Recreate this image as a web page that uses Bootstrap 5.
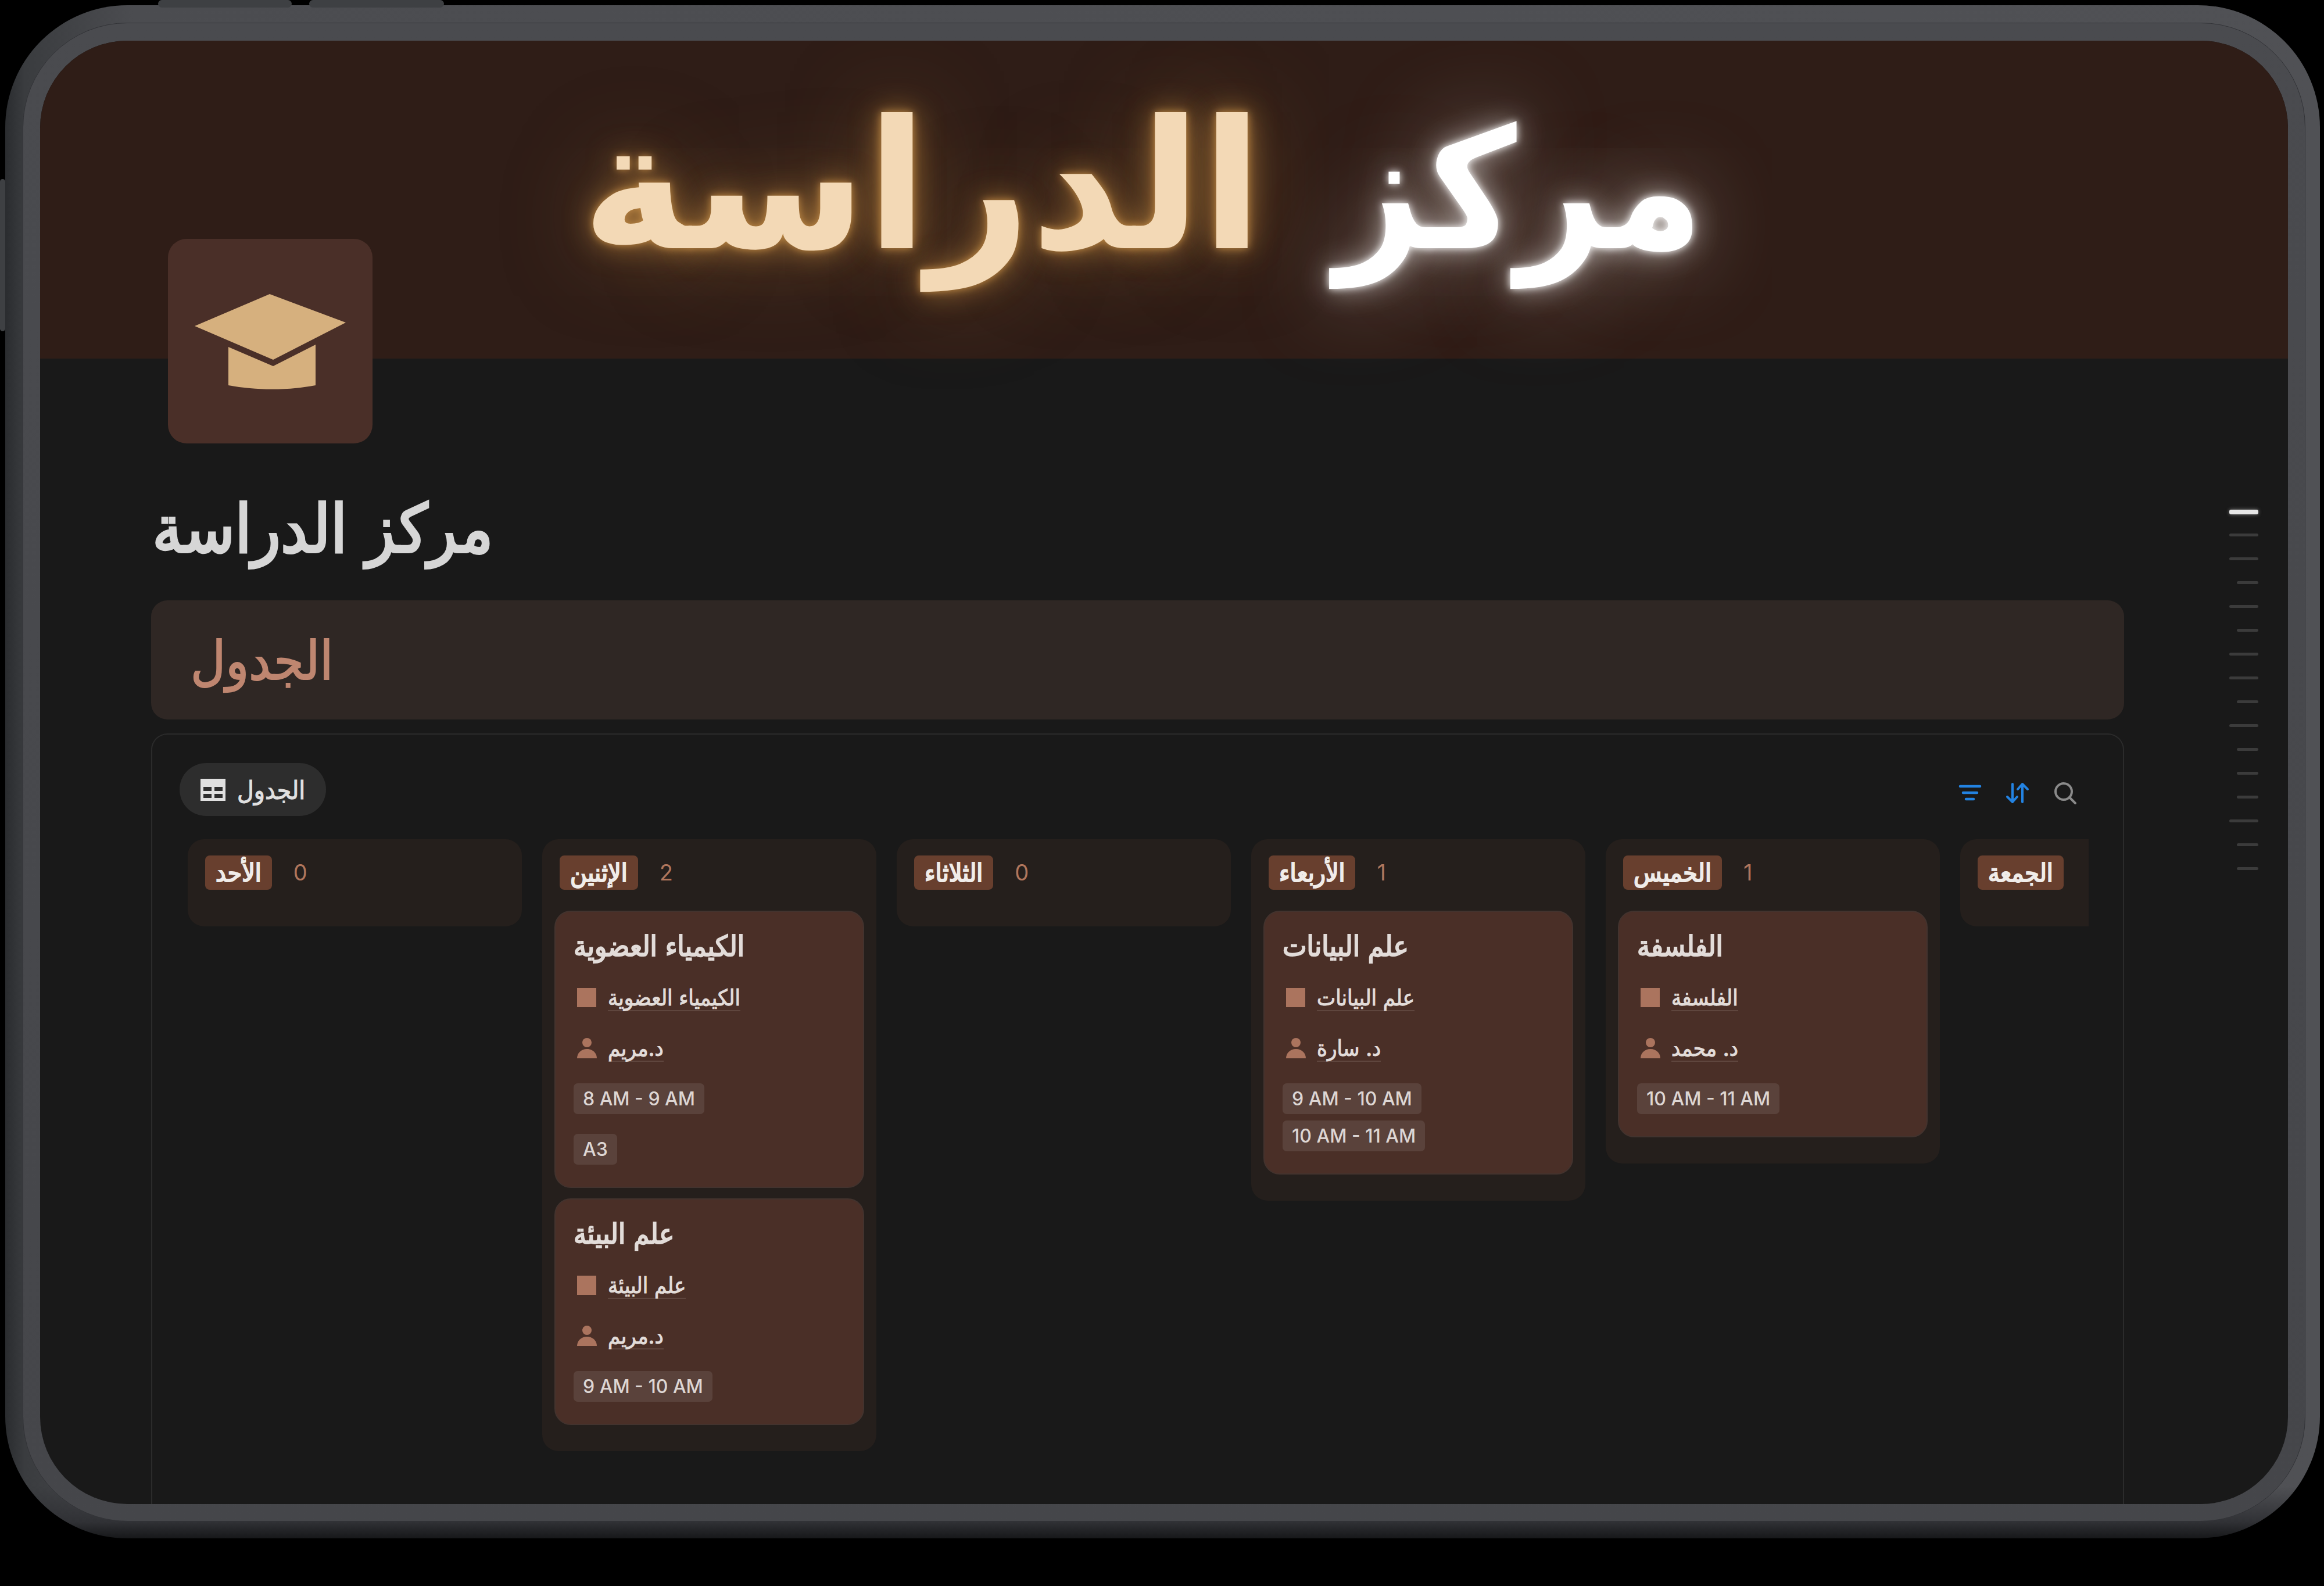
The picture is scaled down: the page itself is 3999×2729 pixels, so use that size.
<!DOCTYPE html>
<html lang="ar" dir="ltr">
<head>
<meta charset="utf-8">
<meta name="viewport" content="width=device-width, initial-scale=1">
<title>مركز الدراسة</title>
<link href="https://cdn.jsdelivr.net/npm/bootstrap@5.3.0/dist/css/bootstrap.min.css" rel="stylesheet">
<style>
  body { background: #000; color: #d6d6d6; font-family: Inter, "DejaVu Sans Condensed", "DejaVu Sans", sans-serif; padding: 9px 7px 82px 9px; }
  h1, h2, h3 { line-height: 1; margin: 0; }
  a, a:hover { color: inherit; }

  /* tablet body */
  .tablet { border-radius: 210px; padding: 30px 25px 29px 30px;
    background: linear-gradient(to top, #17181a 0, #232427 14px, #303135 28px, transparent 90px), linear-gradient(to right, #2a2c2f 0, #3a3c3f 34px, #4b4c50 220px, #505155 100%); }
  .bezel { border-radius: 180px; padding: 30px 29px 29px; border: 1px solid #323337; background: linear-gradient(#4a4b4f, #45464a); }
  .screen { border-radius: 150px; background: #191919; overflow: hidden; }
  .side-key { position: absolute; background: #3e4043; border-radius: 8px; }
  .key-up { left: 272px; top: 0; width: 230px; height: 13px; }
  .key-down { left: 532px; top: 0; width: 232px; height: 13px; }
  .key-power { left: 0; top: 308px; width: 9px; height: 262px; }

  .cover { background: #2f1d17; height: 547px; }
  .neon { font-weight: 700; gap: 125px; padding: 0 1006px 46px 0; }
  .neon-white { font-size: 288px; font-family: "DejaVu Sans Condensed", "DejaVu Sans", sans-serif; color: #fff; text-shadow: 0 0 14px #fff, 0 0 50px rgba(255,255,255,.6), 0 0 150px rgba(255,240,225,.5); }
  .neon-gold { font-size: 308px; font-family: "DejaVu Sans", sans-serif; color: #f3d9b6; text-shadow: 0 0 14px #c08a45, 0 0 50px rgba(190,135,65,.75), 0 0 150px rgba(190,135,65,.5); }

  .main-col { padding-left: 191px; min-width: 0; }
  .page-icon { width: 352px; height: 352px; margin: -206px 0 0 29px; border-radius: 32px; background: #4a2f28; position: relative; }
  .page-title { font-size: 115px; font-weight: 400; line-height: 180px; margin: 56px 0 34px; padding-left: 2px; color: #d6d6d6; -webkit-text-stroke: 4px #d6d6d6; }
  .callout { background: #2f2724; color: #bf8670; border-radius: 28px; padding: 0 68px; margin-bottom: 24px; }
  .callout h2 { font-size: 92px; font-weight: 400; line-height: 205px; -webkit-text-stroke: 2px #bf8670; }
  .board-frame { border: 2px solid #2b2b2b; border-bottom: 0; border-radius: 28px 28px 0 0; padding: 49px 59px 0 61px; }

  .toolbar { margin: 0 0 40px -14px; }
  .view-tab { background: #2d2d2d; color: #e0e0e0; border: 0; border-radius: 46px; height: 91px; padding: 0 36px; gap: 20px; font-size: 44px; -webkit-text-stroke: 1px #e0e0e0; }
  .tool-btn { background: none; border: 0; padding: 0; color: #2383e2; }
  .tool-btn.muted-btn { color: #8a8a8a; }
  .tools { gap: 40px; margin: 12px 20px 0 0; }

  .board { gap: 35px; overflow: hidden; }
  .day { flex: 0 0 575px; background: #251f1c; border-radius: 28px; padding: 28px 21px 27px; }
  .day-head { gap: 37px; padding-left: 9px; margin-bottom: 36px; color: #b0765c; font-size: 38px; line-height: 59px; }
  .day-tag { background: #683f2e; color: #f0ece9; border-radius: 8px; padding: 0 18px; font-size: 44px; -webkit-text-stroke: 2px #f0ece9; }
  .course { background: #4a2f27; border: 2px solid #43332e; border-radius: 28px; padding: 31px 31px 38px; margin-bottom: 18px; gap: 34px; }
  .course h3 { font-size: 49px; font-weight: 400; line-height: 56px; color: #e2dcd9; -webkit-text-stroke: 2px #e2dcd9; }
  .prop { height: 53px; gap: 18px; padding-left: 5px; font-size: 38px; line-height: 44px; color: #e2dcd9; -webkit-text-stroke: 1px #e2dcd9; }
  .prop a { text-decoration: none; border-bottom: 2px solid #5f463e; }
  .prop svg { color: #ab745e; }
  .chips { gap: 11px; }
  .chip { background: #5a423b; color: #ddd6d3; border-radius: 7px; padding: 0 16px; font-size: 32px; font-weight: 500; line-height: 53px; }

  .outline { width: 282px; padding: 260px 51px 0 0; }
  .outline a { display: block; width: 50px; height: 41px; }
  .outline a::before { content: ""; display: block; height: 5px; border-radius: 3px; background: #3b3b3b; }
  .outline a.sub { width: 37px; }
  .outline a.now::before { height: 8px; background: #e6e6e6; box-shadow: 0 0 6px #777; }
</style>
</head>
<body class="min-vh-100 d-flex flex-column">
<span class="side-key key-up"></span><span class="side-key key-down"></span><span class="side-key key-power"></span>

<svg class="d-none" xmlns="http://www.w3.org/2000/svg">
  <symbol id="i-square" viewBox="0 0 36 36"><rect x="1" y="1" width="33" height="33" fill="currentColor" stroke="none"/></symbol>
  <symbol id="i-person" viewBox="0 0 36 36"><circle cx="18" cy="8" r="8" fill="currentColor"/><path d="M1 35c0-9 7-16 17-16s17 7 17 16z" fill="currentColor"/></symbol>
</svg>

<div class="tablet flex-grow-1 d-flex flex-column">
<div class="bezel flex-grow-1 d-flex flex-column">
<div class="screen flex-grow-1 d-flex flex-column">

  <header class="cover d-flex align-items-center justify-content-end">
    <h1 class="neon d-flex align-items-baseline" dir="rtl"><span class="neon-white">مركز</span><span class="neon-gold">الدراسة</span></h1>
  </header>

  <div class="d-flex flex-grow-1">
    <main class="main-col flex-grow-1 d-flex flex-column">
      <div class="page-icon">
        <svg width="352" height="352" viewBox="0 0 352 352" fill="#d6b07e"><path d="M46 150L175 95l131 49-125 64z"/><path d="M104 186l77 33 73-37v70c-48 9-102 9-150 0z"/></svg>
      </div>
      <h1 class="page-title">مركز الدراسة</h1>
      <div class="callout"><h2>الجدول</h2></div>

      <section class="board-frame flex-grow-1">
        <div class="toolbar d-flex align-items-center justify-content-between">
          <button class="view-tab d-flex align-items-center" type="button">
            <svg width="43" height="38" viewBox="0 0 43 38"><path fill="currentColor" stroke="none" fill-rule="evenodd" d="M0 0h43v38H0zM5 14v7h14v-7zM24 14v7h14v-7zM5 26v7h14v-7zM24 26v7h14v-7z"/></svg>
            <span>الجدول</span>
          </button>
          <div class="tools d-flex align-items-center">
            <button class="tool-btn d-flex" type="button" aria-label="تصفية"><svg width="40" height="40" viewBox="0 0 40 40" fill="none" stroke="currentColor" stroke-width="4.5" stroke-linecap="round"><path d="M3 8h34M8 19h24M13 30h13"/></svg></button>
            <button class="tool-btn d-flex" type="button" aria-label="ترتيب"><svg width="44" height="40" viewBox="0 0 44 40" fill="none" stroke="currentColor" stroke-width="4" stroke-linecap="round" stroke-linejoin="round"><path d="M13 4v30M4 26l9 9 8-9M30 35V5M22 13l8-9 9 9"/></svg></button>
            <button class="tool-btn muted-btn d-flex" type="button" aria-label="بحث"><svg width="40" height="40" viewBox="0 0 40 40" fill="none" stroke="currentColor" stroke-width="4" stroke-linecap="round"><circle cx="17" cy="17" r="14"/><path d="M27 27l10 10"/></svg></button>
          </div>
        </div>

        <div class="board d-flex align-items-start">
          <div class="day">
            <div class="day-head d-flex"><span class="day-tag">الأحد</span><span>0</span></div>
          </div>
          <div class="day">
            <div class="day-head d-flex"><span class="day-tag">الإثنين</span><span>2</span></div>
            <article class="course d-flex flex-column">
              <h3>الكيمياء العضوية</h3>
              <div class="prop d-flex align-items-center"><svg width="36" height="36"><use href="#i-square"/></svg><a href="#">الكيمياء العضوية</a></div>
              <div class="prop d-flex align-items-center"><svg width="36" height="36" stroke="none"><use href="#i-person"/></svg><a href="#">د.مريم</a></div>
              <div class="chips d-flex flex-column align-items-start"><span class="chip">8 AM - 9 AM</span></div>
              <div class="chips d-flex flex-column align-items-start"><span class="chip">A3</span></div>
            </article>
            <article class="course d-flex flex-column">
              <h3>علم البيئة</h3>
              <div class="prop d-flex align-items-center"><svg width="36" height="36"><use href="#i-square"/></svg><a href="#">علم البيئة</a></div>
              <div class="prop d-flex align-items-center"><svg width="36" height="36"><use href="#i-person"/></svg><a href="#">د.مريم</a></div>
              <div class="chips d-flex flex-column align-items-start"><span class="chip">9 AM - 10 AM</span></div>
            </article>
          </div>
          <div class="day">
            <div class="day-head d-flex"><span class="day-tag">الثلاثاء</span><span>0</span></div>
          </div>
          <div class="day">
            <div class="day-head d-flex"><span class="day-tag">الأربعاء</span><span>1</span></div>
            <article class="course d-flex flex-column">
              <h3>علم البيانات</h3>
              <div class="prop d-flex align-items-center"><svg width="36" height="36"><use href="#i-square"/></svg><a href="#">علم البيانات</a></div>
              <div class="prop d-flex align-items-center"><svg width="36" height="36"><use href="#i-person"/></svg><a href="#">د. سارة</a></div>
              <div class="chips d-flex flex-column align-items-start"><span class="chip">9 AM - 10 AM</span><span class="chip">10 AM - 11 AM</span></div>
            </article>
          </div>
          <div class="day">
            <div class="day-head d-flex"><span class="day-tag">الخميس</span><span>1</span></div>
            <article class="course d-flex flex-column">
              <h3>الفلسفة</h3>
              <div class="prop d-flex align-items-center"><svg width="36" height="36"><use href="#i-square"/></svg><a href="#">الفلسفة</a></div>
              <div class="prop d-flex align-items-center"><svg width="36" height="36"><use href="#i-person"/></svg><a href="#">د. محمد</a></div>
              <div class="chips d-flex flex-column align-items-start"><span class="chip">10 AM - 11 AM</span></div>
            </article>
          </div>
          <div class="day">
            <div class="day-head d-flex"><span class="day-tag">الجمعة</span></div>
          </div>
        </div>
      </section>
    </main>

    <nav class="outline d-flex flex-column align-items-end flex-shrink-0" aria-label="المحتويات">
      <a class="now" href="#"></a><a href="#"></a><a href="#"></a><a class="sub" href="#"></a><a href="#"></a><a class="sub" href="#"></a><a href="#"></a><a href="#"></a><a class="sub" href="#"></a><a href="#"></a><a class="sub" href="#"></a><a class="sub" href="#"></a><a class="sub" href="#"></a><a href="#"></a><a class="sub" href="#"></a><a class="sub" href="#"></a>
    </nav>
  </div>
</div>
</div>
</div>
<script src="https://cdn.jsdelivr.net/npm/bootstrap@5.3.0/dist/js/bootstrap.bundle.min.js"></script>
</body>
</html>
